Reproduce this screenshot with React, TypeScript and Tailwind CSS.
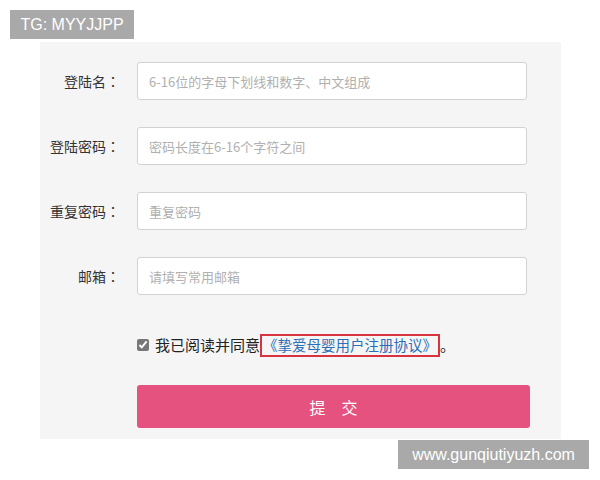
import React from "react";

const cjk = { fontFamily: '"Microsoft YaHei", "Noto Sans CJK SC", "Noto Sans", sans-serif' };
const colonFont = { fontFamily: '"Noto Sans CJK TC", "Noto Sans CJK SC", sans-serif' };
const latin = { fontFamily: '"Liberation Sans", Arial, sans-serif' };

const fields = [
  { label: "登陆名", placeholder: "6-16位的字母下划线和数字、中文组成", type: "text" },
  { label: "登陆密码", placeholder: "密码长度在6-16个字符之间", type: "password" },
  { label: "重复密码", placeholder: "重复密码", type: "password" },
  { label: "邮箱", placeholder: "请填写常用邮箱", type: "text" },
];

export default function App() {
  return (
    <div className="relative w-[600px] h-[480px] bg-white overflow-hidden" style={cjk}>
      {/* watermark top */}
      <div
        className="absolute left-[10px] top-[10px] w-[124px] h-[29px] bg-[#a9a9a9] text-white text-[16px] flex items-center justify-center"
        style={latin}
      >
        TG: MYYJJPP
      </div>

      <div className="ml-[40px] pt-[42px]">
        <div className="w-[521px] h-[397px] bg-[#f5f5f5] pt-[20px]">
          <div className="flex flex-col gap-[27px]">
            {fields.map((f) => (
              <div className="flex items-center" key={f.label}>
                <label className="w-[80px] text-right text-[14px] text-[#333] whitespace-nowrap">
                  {f.label}
                  <span style={colonFont}>：</span>
                </label>
                <input
                  type={f.type}
                  placeholder={f.placeholder}
                  className="ml-[17px] w-[390px] h-[38px] bg-white border border-[#d2d2d2] rounded-[3px] px-[11px] text-[13px] placeholder:text-[#b0b0b0] outline-none"
                  style={cjk}
                />
              </div>
            ))}
          </div>

          <div className="flex items-center ml-[97px] mt-[38px] h-[24px]">
            <input type="checkbox" defaultChecked className="w-[12px] h-[12px] m-0 accent-[#777]" />
            <span className="ml-[6px] text-[15px] text-[#222]">我已阅读并同意</span>
            <a className="border-2 border-[#d8343f] h-[23px] px-[1px] flex items-center text-[14.5px] text-[#2a6fb8] whitespace-nowrap">
              《挚爱母婴用户注册协议》
            </a>
            <span className="text-[15px] text-[#222]">。</span>
          </div>

          <button className="ml-[97px] mt-[28px] w-[393px] h-[43px] rounded-[3px] bg-[#e5527f] text-white text-[16px] tracking-[16px] pl-[16px]">
            提交
          </button>
        </div>
      </div>

      {/* watermark bottom */}
      <div
        className="absolute left-[398px] top-[440px] w-[191px] h-[29px] bg-[#a9a9a9] text-white text-[16px] flex items-center justify-center"
        style={latin}
      >
        www.gunqiutiyuzh.com
      </div>
    </div>
  );
}
